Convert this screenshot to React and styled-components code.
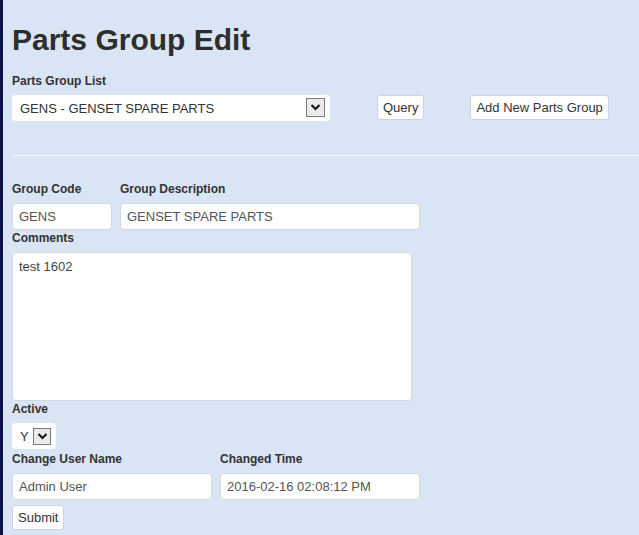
import React from "react";
import styled, { createGlobalStyle } from "styled-components";

const GlobalStyle = createGlobalStyle`
  html, body {
    margin: 0;
    padding: 0;
    background: #d9e4f5;
  }
  body {
    font-family: "Liberation Sans", Arial, sans-serif;
    color: #333;
  }
`;

const Page = styled.div`
  min-height: 535px;
  border-left: 3px solid #0b1246;
  box-sizing: border-box;
  padding: 22px 0 0 9px;
`;

const Title = styled.h1`
  margin: 0 0 16px;
  font-size: 30px;
  line-height: 36px;
  font-weight: bold;
  color: #2e2e2e;
`;

const Label = styled.label`
  display: block;
  font-size: 12px;
  line-height: 15px;
  font-weight: bold;
  color: #333;
  margin-bottom: 6px;
  margin-top: ${(p) => p.$mt || 0}px;
`;

const Toolbar = styled.div`
  display: flex;
  align-items: flex-start;
`;

const SelectBox = styled.div`
  box-sizing: border-box;
  display: flex;
  align-items: center;
  justify-content: space-between;
  width: ${(p) => p.$width}px;
  height: 26px;
  padding: 0 5px 0 8px;
  background: #fff;
  border-radius: 4px;
  font-size: 13px;
  color: #333;
  gap: 3px;
`;

const ArrowBox = styled.span`
  box-sizing: border-box;
  display: flex;
  align-items: center;
  justify-content: center;
  width: ${(p) => p.$w || 19}px;
  height: ${(p) => p.$h || 19}px;
  border: 1px solid #7a7a7a;
  background: #eaeaea;
  margin-top: ${(p) => p.$mt || 0}px;
`;

const Button = styled.button`
  box-sizing: border-box;
  height: 25px;
  padding: 0 5px;
  background: #fff;
  border: 1px solid #cdd3dc;
  border-radius: 3px;
  font-family: "Liberation Sans", Arial, sans-serif;
  font-size: 13px;
  color: #333;
  margin-left: ${(p) => p.$ml || 0}px;
`;

const Divider = styled.hr`
  margin: 34px 0 26px;
  border: none;
  height: 1px;
  background: #f1f5fb;
`;

const Row = styled.div`
  display: flex;
  gap: 8px;
  margin-bottom: ${(p) => p.$mb || 0}px;
`;

const Field = styled.div`
  display: flex;
  flex-direction: column;
`;

const Input = styled.input`
  box-sizing: border-box;
  width: ${(p) => p.$width}px;
  height: 27px;
  padding: 0 6px;
  background: #fff;
  border: 1px solid #d2d8e0;
  border-radius: 4px;
  font-family: "Liberation Sans", Arial, sans-serif;
  font-size: 13px;
  color: #555;
  outline: none;
`;

const TextArea = styled.textarea`
  box-sizing: border-box;
  display: block;
  width: 400px;
  height: 149px;
  padding: 6px;
  background: #fff;
  border: 1px solid #d2d8e0;
  border-radius: 4px;
  font-family: "Liberation Sans", Arial, sans-serif;
  font-size: 13px;
  color: #444;
  resize: none;
  outline: none;
`;

const Chevron = () => (
  <svg width="11" height="8" viewBox="0 0 11 8">
    <path d="M1.5 2 L5.5 6 L9.5 2" fill="none" stroke="#111" strokeWidth="2" />
  </svg>
);

export default function App() {
  return (
    <Page>
      <GlobalStyle />
      <Title>Parts Group Edit</Title>

      <Label>Parts Group List</Label>
      <Toolbar>
        <SelectBox $width={318}>
          <span>GENS - GENSET SPARE PARTS</span>
          <ArrowBox $mt={-2}>
            <Chevron />
          </ArrowBox>
        </SelectBox>
        <Button $ml={47}>Query</Button>
        <Button $ml={46}>Add New Parts Group</Button>
      </Toolbar>

      <Divider />

      <Row $mb={1}>
        <Field>
          <Label>Group Code</Label>
          <Input $width={100} defaultValue="GENS" />
        </Field>
        <Field>
          <Label>Group Description</Label>
          <Input $width={300} defaultValue="GENSET SPARE PARTS" />
        </Field>
      </Row>

      <Field>
        <Label>Comments</Label>
        <TextArea defaultValue="test 1602" />
      </Field>

      <Row $mb={3}>
        <Field>
          <Label $mt={1}>Active</Label>
          <SelectBox $width={44}>
            <span>Y</span>
            <ArrowBox $w={18} $h={17}>
              <Chevron />
            </ArrowBox>
          </SelectBox>
        </Field>
      </Row>

      <Row $mb={5}>
        <Field>
          <Label>Change User Name</Label>
          <Input $width={200} defaultValue="Admin User" />
        </Field>
        <Field>
          <Label>Changed Time</Label>
          <Input $width={200} defaultValue="2016-02-16 02:08:12 PM" />
        </Field>
      </Row>

      <Button>Submit</Button>
    </Page>
  );
}
